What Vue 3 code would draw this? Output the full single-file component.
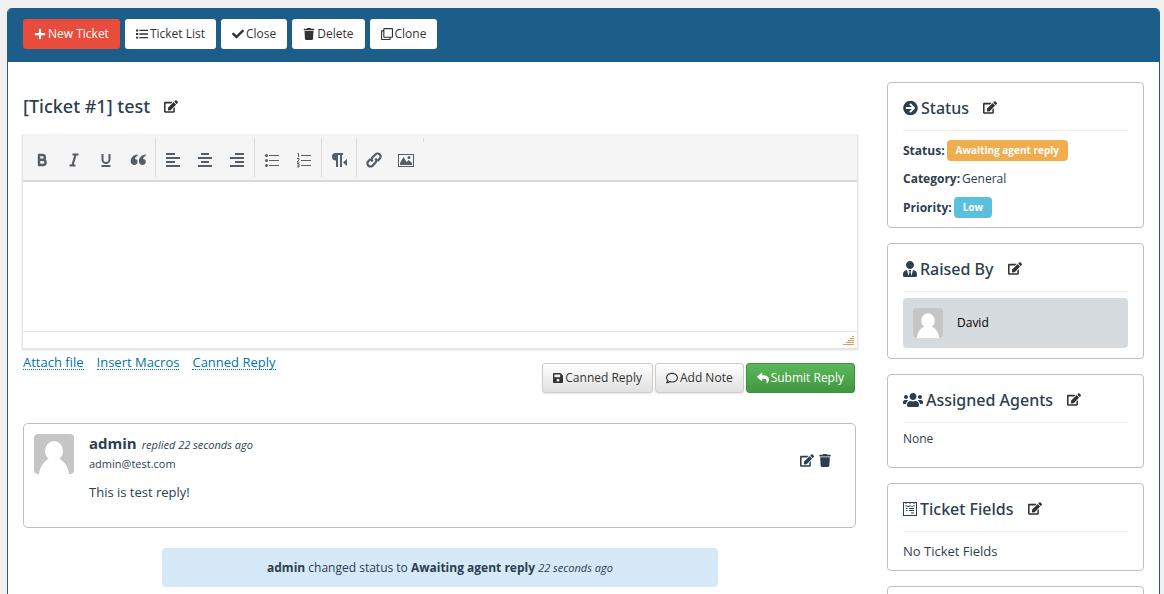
<script setup>
const paths = {
  edit: ['0 0 576 512', 'M402.6 83.2l90.2 90.2c3.8 3.8 3.8 10 0 13.8L274.4 405.6l-92.8 10.3c-12.4 1.4-22.9-9.1-21.5-21.5l10.3-92.8L388.8 83.2c3.8-3.8 10-3.8 13.8 0zm162-22.9l-48.8-48.8c-15.2-15.2-39.9-15.2-55.2 0l-35.4 35.4c-3.8 3.8-3.8 10 0 13.8l90.2 90.2c3.8 3.8 10 3.8 13.8 0l35.4-35.4c15.2-15.3 15.2-40 0-55.2zM384 346.2V448H64V128h229.8c3.2 0 6.2-1.3 8.5-3.5l40-40c7.6-7.6 2.2-20.5-8.5-20.5H48C21.5 64 0 85.5 0 112v352c0 26.5 21.5 48 48 48h352c26.5 0 48-21.5 48-48V306.2c0-10.7-12.9-16-20.5-8.5l-40 40c-2.2 2.3-3.5 5.3-3.5 8.5z'],
  plus: ['0 0 448 512', 'M416 208H272V64c0-17.67-14.33-32-32-32h-32c-17.67 0-32 14.33-32 32v144H32c-17.67 0-32 14.33-32 32v32c0 17.67 14.33 32 32 32h144v144c0 17.67 14.33 32 32 32h32c17.67 0 32-14.33 32-32V304h144c17.67 0 32-14.33 32-32v-32c0-17.67-14.33-32-32-32z'],
  list: ['0 0 512 512', 'M0 64h96v80H0zM144 72h368v56H144zM0 216h96v80H0zM144 228h368v56H144zM0 368h96v80H0zM144 384h368v56H144z'],
  check: ['0 0 512 512', 'M173.898 439.404l-166.4-166.4c-9.997-9.997-9.997-26.206 0-36.204l36.203-36.204c9.997-9.998 26.207-9.998 36.204 0L192 312.69 432.095 72.596c9.997-9.997 26.207-9.997 36.204 0l36.203 36.204c9.997 9.997 9.997 26.206 0 36.204l-294.4 294.401c-9.998 9.997-26.207 9.997-36.204-.001z'],
  trash: ['0 0 448 512', 'M432 32H312l-9.4-18.7A24 24 0 0 0 281.1 0H166.8a23.72 23.72 0 0 0-21.4 13.3L136 32H16A16 16 0 0 0 0 48v32a16 16 0 0 0 16 16h416a16 16 0 0 0 16-16V48a16 16 0 0 0-16-16zM53.2 467a48 48 0 0 0 47.9 45h245.8a48 48 0 0 0 47.9-45L416 128H32z'],
  clone: ['0 0 512 512', 'M464 0H144c-26.51 0-48 21.49-48 48v48H48c-26.51 0-48 21.49-48 48v320c0 26.51 21.49 48 48 48h320c26.51 0 48-21.49 48-48v-48h48c26.51 0 48-21.49 48-48V48c0-26.51-21.49-48-48-48zM362 464H54a6 6 0 0 1-6-6V150a6 6 0 0 1 6-6h42v224c0 26.51 21.49 48 48 48h224v42a6 6 0 0 1-6 6zm96-96H150a6 6 0 0 1-6-6V54a6 6 0 0 1 6-6h308a6 6 0 0 1 6 6v308a6 6 0 0 1-6 6z'],
  arrow: ['0 0 512 512', 'M256 8c137 0 248 111 248 248S393 504 256 504 8 393 8 256 119 8 256 8zm-28.9 143.6l75.5 72.4H120c-13.3 0-24 10.7-24 24v16c0 13.3 10.7 24 24 24h182.6l-75.5 72.4c-9.7 9.3-9.9 24.8-.4 34.3l11 10.9c9.4 9.4 24.6 9.4 33.9 0L404.3 273c9.4-9.4 9.4-24.6 0-33.9L271.6 106.3c-9.4-9.4-24.6-9.4-33.9 0l-11 10.9c-9.5 9.6-9.3 25.1.4 34.4z'],
  users: ['0 0 640 512', 'M96 224c35.3 0 64-28.7 64-64s-28.7-64-64-64-64 28.7-64 64 28.7 64 64 64zm448 0c35.3 0 64-28.7 64-64s-28.7-64-64-64-64 28.7-64 64 28.7 64 64 64zm32 32h-64c-17.6 0-33.5 7.1-45.1 18.6 40.3 22.1 68.9 62 75.1 109.4h66c17.7 0 32-14.3 32-32v-32c0-35.3-28.7-64-64-64zm-256 0c61.9 0 112-50.1 112-112S381.9 32 320 32 208 82.1 208 144s50.1 112 112 112zm76.8 32h-8.3c-20.8 10-43.9 16-68.5 16s-47.6-6-68.5-16h-8.3C179.6 288 128 339.6 128 403.2V432c0 26.5 21.5 48 48 48h288c26.5 0 48-21.5 48-48v-28.8c0-63.6-51.6-115.2-115.2-115.2zm-223.7-13.4C161.5 263.1 145.6 256 128 256H64c-35.3 0-64 28.7-64 64v32c0 17.7 14.3 32 32 32h65.9c6.3-47.4 34.9-87.3 75.2-109.4z'],
  tie: ['0 0 448 512', 'M224 256c70.7 0 128-57.3 128-128S294.7 0 224 0 96 57.3 96 128s57.3 128 128 128zm95.8 32.6L272 480l-32-136 32-56h-96l32 56-32 136-47.8-191.4C56.9 292 0 350.3 0 422.4V464c0 26.5 21.5 48 48 48h352c26.5 0 48-21.5 48-48v-41.6c0-72.1-56.9-130.4-128.2-133.8z'],
  reply: ['0 0 512 512', 'M8.309 189.836L184.313 37.851C199.719 24.546 224 35.347 224 56.015v80.053c160.629 1.839 288 34.032 288 186.258 0 61.441-39.581 122.309-83.333 154.132-13.653 9.931-33.111-2.533-28.077-18.631 45.344-145.012-21.507-183.51-176.59-185.742V360c0 20.7-24.3 31.453-39.687 18.164l-176.004-152c-11.071-9.562-11.086-26.753 0-36.328z'],
  save: ['0 0 448 512', 'M433.941 129.941l-83.882-83.882A48 48 0 0 0 316.118 32H48C21.49 32 0 53.49 0 80v352c0 26.51 21.49 48 48 48h352c26.51 0 48-21.49 48-48V163.882a48 48 0 0 0-14.059-33.941zM224 416c-35.346 0-64-28.654-64-64 0-35.346 28.654-64 64-64s64 28.654 64 64c0 35.346-28.654 64-64 64zm96-304.52V212c0 6.627-5.373 12-12 12H76c-6.627 0-12-5.373-12-12V108c0-6.627 5.373-12 12-12h228.52c3.183 0 6.235 1.264 8.485 3.515l3.48 3.48A11.996 11.996 0 0 1 320 111.48z'],
  comment: ['0 0 512 512', 'M256 32C114.6 32 0 125.1 0 240c0 47.6 19.9 91.2 52.9 126.3C38 405.7 7 439.1 6.5 439.5c-6.6 7-8.4 17.2-4.6 26S14.4 480 24 480c61.5 0 110-25.7 139.1-46.3C192 442.8 223.2 448 256 448c141.4 0 256-93.1 256-208S397.4 32 256 32zm0 368c-26.7 0-53.1-4.1-78.4-12.1l-22.7-7.2-19.5 13.8c-14.3 10.1-33.9 21.4-57.5 29 7.3-12.1 14.4-25.7 19.9-40.2l10.6-28.1-20.6-21.8C69.7 314.1 48 282.2 48 240c0-88.2 93.3-160 208-160s208 71.8 208 160-93.3 160-208 160z'],
  form: ['0 0 14 14', 'M0 0h14v14H0zM1 1v12h12V1h-1l-1 1-1-1H8L7 2 6 1H4L3 2 2 1zM2 3.500h2l1 .8 1-.8h2l1 .8 1-.8h2v.7h-1.500l-1.500.8-1-.8H7l-1 .8H4.500l-1-.8H2zM3 6h1.500v1H3zM6 6h5v1H6zM3 8h1.500v1H3zM6 8h5v1H6zM8 10.500h3v1H8z'],
}

const actions = [
  { icon: 'plus', label: 'New Ticket', kind: 'danger' },
  { icon: 'list', label: 'Ticket List' },
  { icon: 'check', label: 'Close' },
  { icon: 'trash', label: 'Delete' },
  { icon: 'clone', label: 'Clone' },
]

/* Toolbar glyphs on a 20 x 20 grid: filled shapes (f) and stroked lines (s). */
const tools = [
  [
    { name: 'Bold', s: 'M7 5v10M6 5h4.500a2.200 2.200 0 0 1 0 4.800H7h4a2.600 2.600 0 0 1 0 5.200H6', w: 2.4 },
    { name: 'Italic', s: 'M8.500 4.500h6M5.500 15.500h6M11.600 4.500l-3.200 11', w: 2.2 },
    { name: 'Underline', s: 'M6.500 4v5.500a3.500 3.500 0 0 0 7 0V4M5.500 16h9', w: 2 },
    { name: 'Blockquote', f: 'M9.500 4.500v1.400c-1.600.5-2.500 1.500-2.600 3 1.700 0 2.700 1 2.700 2.800S8.300 15 6.300 15s-3.600-1.400-3.600-4c0-3.300 2.600-6.100 6.800-6.500zM17.700 4.500v1.400c-1.600.5-2.500 1.500-2.600 3 1.700 0 2.700 1 2.700 2.800s-1.300 3.300-3.300 3.300-3.600-1.400-3.600-4c0-3.300 2.600-6.100 6.800-6.500z' },
  ],
  [
    { name: 'Align left', f: 'M3 3h9v2H3zM3 7h14v2H3zM3 11h9v2H3zM3 15h14v2H3z' },
    { name: 'Align center', f: 'M6 3h8v2H6zM3 7h14v2H3zM6 11h8v2H6zM3 15h14v2H3z' },
    { name: 'Align right', f: 'M8 3h9v2H8zM3 7h14v2H3zM8 11h9v2H8zM3 15h14v2H3z' },
  ],
  [
    { name: 'Bulleted list', f: 'M3 5.500a1.500 1.500 0 1 0 3 0a1.500 1.500 0 1 0-3 0M3 10.500a1.500 1.500 0 1 0 3 0a1.500 1.500 0 1 0-3 0M3 15.500a1.500 1.500 0 1 0 3 0a1.500 1.500 0 1 0-3 0M7 5h10v1H7zM7 10h10v1H7zM7 15h10v1H7z' },
    { name: 'Numbered list', f: 'M7 5h10v1H7zM7 10h10v1H7zM7 15h10v1H7z', s: 'M3.500 3.500h1v3.500M3 8.500h2v1.500l-2 2h2.500M3 13.500h2v3.500H3M3.500 15.200H5', w: 1 },
  ],
  [{ name: 'Right to left', f: 'M6.500 3H14v2h-1v12h-2V5H9v12H7v-6.500a3.700 3.700 0 0 1-.5-7.500zM18 9v7l-4-3.500z' }],
  [
    { name: 'Insert link', s: 'M8.600 11.500a3 3 0 0 1 0-4.200l2.800-2.900a3 3 0 0 1 4.300 4.300l-2.200 2.200M11.400 8.600a3 3 0 0 1 0 4.200l-2.800 2.800a3 3 0 0 1-4.300-4.300l2.200-2.200', w: 2.2 },
    { name: 'Insert image', f: 'M2 4h16v13H2zM3 5v11h14V5zM4 15V13l3.500-6 3 5 2-2 3.500 3v2zM11.500 7.500a1.500 1.500 0 1 0 3 0a1.500 1.500 0 1 0-3 0' },
  ],
]
</script>

<template>
  <svg class="defs" aria-hidden="true">
    <symbol v-for="(p, name) in paths" :id="'i-' + name" :key="name" :viewBox="p[0]">
      <path :d="p[1]" fill="currentColor" fill-rule="evenodd" />
    </symbol>
    <symbol id="i-avatar" viewBox="0 0 40 40">
      <path d="M0 0h40v40H0z" fill="#c5c5c5" />
      <ellipse cx="20" cy="17" rx="9" ry="10" fill="#fff" />
      <path d="M5 40C6 31 12 25 17 24h6c5 1 11 7 12 16z" fill="#fff" />
    </symbol>
  </svg>

  <div class="frame">
    <header class="bar">
      <button v-for="a in actions" :key="a.label" type="button" class="btn" :class="a.kind">
        <svg class="ico"><use :href="'#i-' + a.icon" /></svg>{{ a.label }}
      </button>
    </header>

    <div class="body">
      <main>
        <h1 class="title">[Ticket #1] test
          <button type="button" class="edit" aria-label="Edit subject"><svg><use href="#i-edit" /></svg></button>
        </h1>

        <section class="editor" aria-label="Reply editor">
          <div class="tools">
            <div v-for="(g, i) in tools" :key="i" class="group">
              <button v-for="t in g" :key="t.name" type="button" class="tool" :aria-label="t.name">
                <svg viewBox="0 0 20 20">
                  <path v-if="t.f" :d="t.f" fill="currentColor" fill-rule="evenodd" />
                  <path v-if="t.s" :d="t.s" fill="none" stroke="currentColor" :stroke-width="t.w" />
                </svg>
              </button>
            </div>
            <div class="group stub"></div>
          </div>
          <textarea class="area" aria-label="Reply text"></textarea>
          <div class="grip">
            <svg viewBox="0 0 11 10" shape-rendering="crispEdges"><path d="M9 0h2v1H9zM7 2h4v1H7zM5 4h6v1H5zM3 6h8v1H3zM0 8h11v1H0z" fill="#dd9a5b" /></svg>
          </div>
        </section>

        <div class="under">
          <nav class="links">
            <a href="#attach">Attach file</a>
            <a href="#macros">Insert Macros</a>
            <a href="#canned">Canned Reply</a>
          </nav>
          <div class="submit">
            <button type="button" class="btn grey"><svg class="ico slim"><use href="#i-save" /></svg>Canned Reply</button>
            <button type="button" class="btn grey"><svg class="ico"><use href="#i-comment" /></svg>Add Note</button>
            <button type="button" class="btn green"><svg class="ico"><use href="#i-reply" /></svg>Submit Reply</button>
          </div>
        </div>

        <article class="reply">
          <svg class="avatar"><use href="#i-avatar" /></svg>
          <div class="thread">
            <div class="who"><strong>admin</strong><em>replied 22 seconds ago</em></div>
            <div class="mail">admin@test.com</div>
            <p>This is test reply!</p>
          </div>
          <div class="ops">
            <button type="button" class="edit" aria-label="Edit reply"><svg><use href="#i-edit" /></svg></button>
            <button type="button" class="edit bin" aria-label="Delete reply"><svg><use href="#i-trash" /></svg></button>
          </div>
        </article>

        <div class="log"><b>admin</b> changed status to <b>Awaiting agent reply</b> <em>22 seconds ago</em></div>
      </main>

      <aside>
        <section class="card status">
          <h2><svg class="w16"><use href="#i-arrow" /></svg>Status
            <button type="button" class="edit" aria-label="Edit status"><svg><use href="#i-edit" /></svg></button></h2>
          <div class="row"><b>Status:</b><span class="tag orange">Awaiting agent reply</span></div>
          <div class="row"><b>Category:</b>General</div>
          <div class="row"><b>Priority:</b><span class="tag blue">Low</span></div>
        </section>
        <section class="card">
          <h2><svg class="w14"><use href="#i-tie" /></svg>Raised By
            <button type="button" class="edit" aria-label="Edit raised by"><svg><use href="#i-edit" /></svg></button></h2>
          <div class="person"><svg class="face"><use href="#i-avatar" /></svg>David</div>
        </section>
        <section class="card agents">
          <h2><svg class="w20"><use href="#i-users" /></svg>Assigned Agents
            <button type="button" class="edit" aria-label="Edit agents"><svg><use href="#i-edit" /></svg></button></h2>
          <p>None</p>
        </section>
        <section class="card fields">
          <h2><svg class="w14"><use href="#i-form" /></svg>Ticket Fields
            <button type="button" class="edit" aria-label="Edit fields"><svg><use href="#i-edit" /></svg></button></h2>
          <p>No Ticket Fields</p>
        </section>
        <section class="card next"></section>
      </aside>
    </div>
  </div>
</template>

<style>
body { background: #f1f1f1; }
</style>

<style scoped>
.defs { position: absolute; width: 0; height: 0; }
.frame {
  margin: 8px 4px 0 7px;
  border: 1px solid #1c5d8a;
  border-top: 0;
  border-radius: 5px 5px 0 0;
  background: #fff;
  color: #2c3e50;
  font: 12px/20px "Open Sans", "Noto Sans", sans-serif;
  overflow: hidden;
}
button { font: inherit; color: inherit; cursor: pointer; }
.bar { display: flex; gap: 5px; padding: 11px 15px 13px; background: #1c5d8a; }
.btn {
  display: flex;
  align-items: center;
  justify-content: center;
  gap: 2px;
  height: 30px;
  padding: 0 10px;
  border: 1px solid transparent;
  border-radius: 3px;
  background: #fff;
  color: #333;
  white-space: nowrap;
}
.btn.danger { background: #e74c3c; color: #fff; }
.ico { width: 12px; height: 12px; }
.ico.slim { width: 10px; }
.body {
  display: grid;
  grid-template-columns: minmax(0, 1fr) 257px;
  gap: 29px;
  padding: 20px 15px 0 14px;
}
h1, h2 { margin: 0; display: flex; align-items: center; font-family: "Noto Sans", "Open Sans", sans-serif; font-weight: 500; }
.title { height: 50px; padding: 0 0 2px 1px; font-size: 18px; gap: 14px; box-sizing: border-box; }
.edit { display: flex; padding: 0; border: 0; background: none; color: #333; }
.edit svg { width: 14px; height: 13px; }
.editor {
  margin-top: 2px;
  border: 1px solid #e5e5e5;
  border-top: 0;
  box-shadow: 0 1px 2px rgba(0, 0, 0, .15);
}
.tools {
  display: flex;
  height: 46px;
  background: #f5f5f5;
  border-bottom: 2px solid #dadada;
  padding-left: 2px;
}
.group { display: flex; gap: 2px; margin: 4px 0 3px; padding: 0 2px; }
.group + .group { border-left: 1px solid #d9d9d9; }
.stub { height: 4px; }
.tool { display: flex; align-items: center; justify-content: center; width: 30px; padding: 4px 0 0; border: 0; background: none; color: #555d66; }
.tool svg { width: 20px; height: 20px; }
.area { display: block; width: 100%; height: 149px; box-sizing: border-box; border: 0; padding: 8px; resize: none; outline: 0; font: inherit; background: #fff; }
.grip { display: flex; justify-content: flex-end; align-items: flex-end; height: 17px; padding-right: 3px; padding-bottom: 2px; box-sizing: border-box; border-top: 1px solid #e2e2e2; }
.grip svg { width: 11px; height: 10px; }
.under { display: flex; justify-content: space-between; margin: 4px 3px 0 1px; }
.links { display: flex; gap: 13px; align-self: flex-start; margin-top: 2px; font-size: 13px; line-height: 14px; }
.links a { color: #0073aa; text-decoration: none; border-bottom: 1px dotted #0073aa; }
.submit { display: flex; gap: 2px; padding-top: 10px; }
.grey { border-color: #ccc; background: linear-gradient(#fff, #e0e0e0); box-shadow: 0 1px 2px rgba(0, 0, 0, .1); }
.green { border-color: #3e8f3e; background: linear-gradient(#5cb85c, #419641); color: #fff; }
.reply {
  display: flex;
  margin: 30px 2px 0 1px;
  min-height: 105px;
  padding: 10px 24px 10px 10px;
  box-sizing: border-box;
  border: 1px solid #bfbfbf;
  border-radius: 5px;
}
.avatar { width: 40px; height: 40px; border-radius: 4px; }
.thread { flex: 1; padding-left: 15px; }
.who { display: flex; align-items: baseline; gap: 5px; line-height: 18px; }
.who strong { font-size: 15px; }
em { font-size: 11px; }
.mail { font-size: 11px; line-height: 20px; }
p { margin: 0; }
.thread p { margin-top: 8px; font-size: 13px; }
.ops { display: flex; gap: 5px; padding-top: 20px; align-items: flex-start; }
.ops .edit { color: #2c3e50; }
.bin svg { width: 12px; }
.log { margin: 20px auto 0; width: 66.6%; padding: 10px 0 9px; text-align: center; border-radius: 4px; background: #d6e9f8; }
aside { display: flex; flex-direction: column; gap: 15px; }
.card { border: 1px solid #bfbfbf; border-radius: 4px; padding: 10px 15px; }
.card h2 { height: 29px; padding-bottom: 8px; margin-bottom: 6px; border-bottom: 1px solid #eee; font-size: 16px; gap: 3px; }
.card h2 .edit { margin-left: 11px; }
.w16 { width: 15px; height: 16px; }
.w14 { width: 14px; height: 16px; }
.w20 { width: 20px; height: 16px; }
.row { display: flex; align-items: center; gap: 2px; min-height: 27px; }
.row + .row { min-height: 29px; }
.status { padding-bottom: 5px; }
.tag { padding: 0 9px; border-radius: 4px; color: #fff; font-size: 10px; line-height: 21px; font-weight: 700; }
.orange { background: #f0ad4e; }
.blue { background: #5bc0de; }
.person { display: flex; align-items: center; gap: 14px; padding: 10px; border-radius: 4px; background: #d6dbdf; color: #000; }
.face { width: 30px; height: 30px; border-radius: 4px; }
.agents { padding-bottom: 18px; }
.fields { padding-bottom: 9px; }
.fields p { padding-top: 3px; font-size: 13px; }
.next { min-height: 60px; }
</style>
